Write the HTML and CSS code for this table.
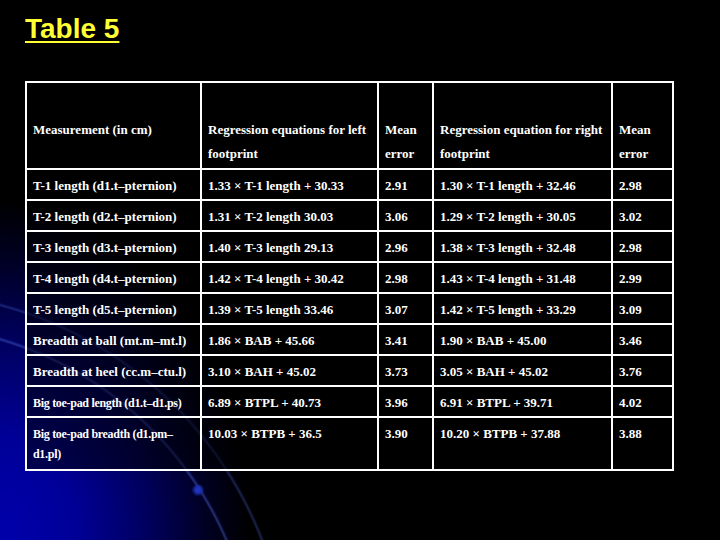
FILE: index.html
```html
<!DOCTYPE html>
<html lang="en">
<head>
<meta charset="utf-8">
<title>Table 5</title>
<link rel="stylesheet" href="styles.css">
</head>
<body>
  <h1 class="title">Table 5</h1>
  <div class="grid" role="table">
    <div class="cell head">Measurement (in cm)</div>
    <div class="cell head">Regression equations for left<br>footprint</div>
    <div class="cell head">Mean<br>error</div>
    <div class="cell head">Regression equation for right<br>footprint</div>
    <div class="cell head">Mean<br>error</div>

    <div class="cell">T-1 length (d1.t–pternion)</div>
    <div class="cell">1.33 × T-1 length + 30.33</div>
    <div class="cell">2.91</div>
    <div class="cell">1.30 × T-1 length + 32.46</div>
    <div class="cell">2.98</div>

    <div class="cell">T-2 length (d2.t–pternion)</div>
    <div class="cell">1.31 × T-2 length 30.03</div>
    <div class="cell">3.06</div>
    <div class="cell">1.29 × T-2 length + 30.05</div>
    <div class="cell">3.02</div>

    <div class="cell">T-3 length (d3.t–pternion)</div>
    <div class="cell">1.40 × T-3 length 29.13</div>
    <div class="cell">2.96</div>
    <div class="cell">1.38 × T-3 length + 32.48</div>
    <div class="cell">2.98</div>

    <div class="cell">T-4 length (d4.t–pternion)</div>
    <div class="cell">1.42 × T-4 length + 30.42</div>
    <div class="cell">2.98</div>
    <div class="cell">1.43 × T-4 length + 31.48</div>
    <div class="cell">2.99</div>

    <div class="cell">T-5 length (d5.t–pternion)</div>
    <div class="cell">1.39 × T-5 length 33.46</div>
    <div class="cell">3.07</div>
    <div class="cell">1.42 × T-5 length + 33.29</div>
    <div class="cell">3.09</div>

    <div class="cell">Breadth at ball (mt.m–mt.l)</div>
    <div class="cell">1.86 × BAB + 45.66</div>
    <div class="cell">3.41</div>
    <div class="cell">1.90 × BAB + 45.00</div>
    <div class="cell">3.46</div>

    <div class="cell">Breadth at heel (cc.m–ctu.l)</div>
    <div class="cell">3.10 × BAH + 45.02</div>
    <div class="cell">3.73</div>
    <div class="cell">3.05 × BAH + 45.02</div>
    <div class="cell">3.76</div>

    <div class="cell small">Big toe-pad length (d1.t–d1.ps)</div>
    <div class="cell">6.89 × BTPL + 40.73</div>
    <div class="cell">3.96</div>
    <div class="cell">6.91 × BTPL + 39.71</div>
    <div class="cell">4.02</div>

    <div class="cell small last">Big toe-pad breadth (d1.pm–<br>d1.pl)</div>
    <div class="cell last">10.03 × BTPB + 36.5</div>
    <div class="cell last">3.90</div>
    <div class="cell last">10.20 × BTPB + 37.88</div>
    <div class="cell last">3.88</div>
  </div>
</body>
</html>
```
FILE: styles.css
```css
html, body {
  margin: 0;
  height: 100%;
}

body {
  width: 720px;
  height: 540px;
  box-sizing: border-box;
  padding: 13px 0 0 25px;
  overflow: hidden;
  background-color: #000;
  background-image:
    radial-gradient(circle at 198px 490px, #2238c0 0, #1c30b0 3px, rgba(20, 40, 170, 0) 6.5px),
    radial-gradient(circle at -100px 680px, rgba(60, 80, 220, 0) 353px, rgba(80, 105, 225, 0.45) 355px, rgba(60, 80, 220, 0) 357.5px),
    radial-gradient(circle at -100px 680px, rgba(60, 80, 220, 0) 386px, rgba(80, 105, 225, 0.32) 388px, rgba(60, 80, 220, 0) 390.5px),
    radial-gradient(ellipse 250px 340px at 0 100%, #0000ac 0%, #000098 30%, #000060 58%, #000020 84%, #000 100%);
  background-repeat: no-repeat;
}

.title {
  margin: 0 0 36px;
  font-family: "Liberation Sans", Arial, sans-serif;
  font-weight: bold;
  font-size: 28px;
  line-height: 32px;
  color: #ffff33;
  text-decoration: underline;
  text-decoration-thickness: 2px;
  text-underline-offset: 3px;
}

.grid {
  display: grid;
  grid-template-columns: 175px 177px 55px 179px 61px;
  width: max-content;
  border-top: 2px solid #fff;
  border-left: 2px solid #fff;
  font-family: "Liberation Serif", "Times New Roman", serif;
  font-weight: bold;
  font-size: 13px;
  color: #fff;
}

.cell {
  border-right: 2px solid #fff;
  border-bottom: 2px solid #fff;
  padding: 6px 4px 3px 6px;
  line-height: 20px;
  height: 20px;
  background: rgba(0, 0, 0, 0.5);
  white-space: nowrap;
}

.head {
  padding-top: 35px;
  padding-bottom: 2px;
  height: 48px;
  line-height: 24px;
  background: #000;
}

.cell.last {
  height: 40px;
  padding-bottom: 5px;
}

.small {
  font-size: 12px;
  letter-spacing: -0.3px;
}
```
